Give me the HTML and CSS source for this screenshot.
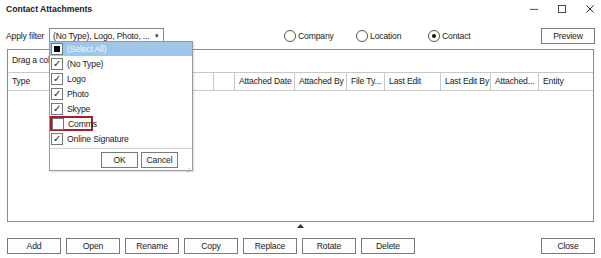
FILE: index.html
```html
<!DOCTYPE html>
<html lang="en">
<head>
    <meta charset="UTF-8">
    <title>Contact Attachments</title>
    <link rel="stylesheet" href="styles.css">
</head>
<body>
    <div class="window">
        <div class="titlebar">
            <span class="title">Contact Attachments</span>
            <div class="controls">
                <svg width="10" height="10" viewBox="0 0 10 10"><path d="M0 5.5h10" stroke="#222" stroke-width="1"/></svg>
                <svg width="10" height="10" viewBox="0 0 10 10"><rect x="0.5" y="0.5" width="9" height="9" fill="none" stroke="#222"/></svg>
                <svg width="10" height="10" viewBox="0 0 10 10"><path d="M0.5 0.5L9.5 9.5M9.5 0.5L0.5 9.5" stroke="#222" stroke-width="1.2"/></svg>
            </div>
        </div>

        <div class="filter-row">
            <span class="label">Apply filter</span>
            <div class="combo">
                <span class="combo-text">(No Type), Logo, Photo, ...</span>
                <span class="arrow">&#9662;</span>
            </div>
            <div class="radios">
                <label class="radio"><span class="dot"></span>Company</label>
                <label class="radio"><span class="dot"></span>Location</label>
                <label class="radio"><span class="dot on"></span>Contact</label>
            </div>
            <button class="btn preview">Preview</button>
        </div>

        <div class="grid">
            <div class="group-panel">Drag a column header here</div>
            <div class="header">
                <div class="col" style="width: 120px">Type</div>
                <div class="col" style="width: 86px"></div>
                <div class="col" style="width: 21px"></div>
                <div class="col" style="width: 60px">Attached Date</div>
                <div class="col" style="width: 52px">Attached By</div>
                <div class="col" style="width: 38px">File Ty...</div>
                <div class="col" style="width: 56px">Last Edit</div>
                <div class="col" style="width: 50px">Last Edit By</div>
                <div class="col" style="width: 48px">Attached...</div>
                <div class="col last">Entity</div>
            </div>
        </div>

        <div class="splitter">
            <svg width="7" height="4" viewBox="0 0 7 4"><path d="M0 4L3.5 0L7 4z" fill="#333"/></svg>
        </div>

        <div class="actions">
            <button class="btn">Add</button>
            <button class="btn">Open</button>
            <button class="btn">Rename</button>
            <button class="btn">Copy</button>
            <button class="btn">Replace</button>
            <button class="btn">Rotate</button>
            <button class="btn">Delete</button>
            <button class="btn close">Close</button>
        </div>

        <div class="popup">
            <div class="item selected"><span class="check partial"></span>(Select All)</div>
            <div class="item"><span class="check ticked">&#10003;</span>(No Type)</div>
            <div class="item"><span class="check ticked">&#10003;</span>Logo</div>
            <div class="item"><span class="check ticked">&#10003;</span>Photo</div>
            <div class="item"><span class="check ticked">&#10003;</span>Skype</div>
            <div class="item"><span class="focus"><span class="check"></span>Comms</span></div>
            <div class="item"><span class="check ticked">&#10003;</span>Online Signature</div>
            <div class="popup-footer">
                <button class="btn small">OK</button>
                <button class="btn small">Cancel</button>
                <span class="grip">.:</span>
            </div>
        </div>
    </div>
</body>
</html>
```

FILE: styles.css
```css
body {
    margin: 0;
    background-color: white;
    font-family: "Liberation Sans", Arial, sans-serif;
    font-size: 8.6px;
    letter-spacing: -0.15px;
    color: #1a1a1a;
}
.window {
    position: relative;
    width: 601px;
    height: 258px;
    overflow: hidden;
}
.titlebar {
    display: flex;
    align-items: center;
    justify-content: space-between;
    height: 17px;
    padding: 0 7px 0 6px;
}
.title {
    font-weight: bold;
    letter-spacing: 0;
}
.controls {
    display: flex;
    gap: 20px;
    align-items: center;
}
.controls svg {
    width: 8px;
    height: 8px;
}
.filter-row {
    display: flex;
    align-items: center;
    height: 17px;
    margin-top: 10px;
    padding: 0 6px;
}
.label {
    width: 43px;
    white-space: nowrap;
}
.combo {
    display: flex;
    align-items: center;
    justify-content: space-between;
    box-sizing: border-box;
    width: 115px;
    height: 15px;
    border: 1px solid #8a8a8a;
    padding: 0 4px 0 3px;
}
.combo-text {
    white-space: nowrap;
    overflow: hidden;
}
.arrow {
    font-size: 7px;
    color: #333;
}
.radios {
    display: flex;
    margin-left: 120px;
}
.radio {
    display: flex;
    align-items: center;
    width: 72px;
    gap: 2px;
}
.dot {
    box-sizing: border-box;
    width: 12px;
    height: 12px;
    border: 1px solid #555;
    border-radius: 50%;
    display: flex;
    align-items: center;
    justify-content: center;
}
.dot.on::after {
    content: "";
    width: 4px;
    height: 4px;
    border-radius: 50%;
    background-color: #111;
}
.btn {
    box-sizing: border-box;
    height: 16px;
    width: 54px;
    padding: 0;
    border: 1px solid #7a7a7a;
    background-color: #fdfdfd;
    font-family: inherit;
    font-size: 8.6px;
    letter-spacing: -0.15px;
    color: #1a1a1a;
}
.preview {
    margin-left: auto;
}
.grid {
    box-sizing: border-box;
    height: 173px;
    margin: 5px 7px 0 7px;
    border: 1px solid #8c8c8c;
}
.group-panel {
    height: 22px;
    line-height: 21px;
    padding-left: 4px;
}
.header {
    display: flex;
    height: 17px;
    border-top: 1px solid #c8c8c8;
    border-bottom: 1px solid #c8c8c8;
}
.col {
    box-sizing: border-box;
    flex: none;
    line-height: 17px;
    padding-left: 4px;
    border-right: 1px solid #c8c8c8;
    white-space: nowrap;
    overflow: hidden;
}
.col.last {
    flex: 1;
    border-right: none;
}
.splitter {
    display: flex;
    justify-content: center;
    height: 16px;
    padding-top: 2px;
    box-sizing: border-box;
}
.actions {
    display: flex;
    gap: 5px;
    padding: 0 6px 0 7px;
}
.actions .btn {
    width: 54px;
}
.actions .close {
    margin-left: auto;
}
.popup {
    position: absolute;
    left: 49px;
    top: 41px;
    width: 144px;
    height: 130px;
    box-sizing: border-box;
    border: 1px solid #9a9a9a;
    background-color: white;
    box-shadow: 1px 1px 2px rgba(0, 0, 0, 0.15);
}
.item {
    display: flex;
    align-items: center;
    height: 15px;
    padding-left: 1px;
    gap: 4px;
}
.item.selected {
    background-color: #9ec6ea;
    color: #f4f8fc;
    height: 14px;
}
.check {
    box-sizing: border-box;
    flex: none;
    width: 12px;
    height: 12px;
    border: 1px solid #777;
    background-color: white;
    display: flex;
    align-items: center;
    justify-content: center;
    font-size: 10px;
    line-height: 1;
    color: #222;
}
.check.partial::after {
    content: "";
    width: 6px;
    height: 6px;
    background-color: #000;
}
.focus {
    display: flex;
    align-items: center;
    gap: 4px;
    box-sizing: border-box;
    height: 15px;
    width: 43px;
    margin-left: -1px;
    border: 2px solid #a3202a;
    padding-left: 0;
}
.popup-footer {
    position: relative;
    display: flex;
    justify-content: flex-end;
    gap: 3px;
    margin-top: 2px;
    border-top: 1px solid #d0d0d0;
    padding: 3px 14px 0 0;
}
.btn.small {
    width: 37px;
    height: 16px;
}
.grip {
    position: absolute;
    right: 2px;
    bottom: -6px;
    font-size: 8px;
    color: #888;
}
```
